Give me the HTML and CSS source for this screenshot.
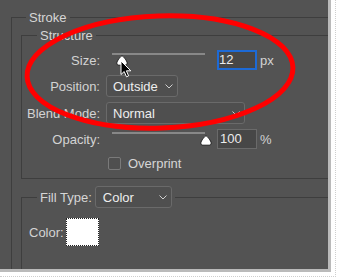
FILE: index.html
```html
<!DOCTYPE html>
<html>
<head>
<meta charset="utf-8">
<link rel="stylesheet" href="styles.css">
</head>
<body>
<div class="frame">
  <div class="panel">
    <fieldset class="group stroke">
      <legend class="legend">Stroke</legend>
      <fieldset class="group structure">
        <legend class="legend legend-inner">Structure</legend>
        <div class="row row-num">
          <span class="label">Size:</span>
          <div class="slider">
            <div class="track"></div>
            <svg class="thumb thumb-size" width="12" height="11" viewBox="0 0 12 11"><path d="M6 0.8 C7 0.8 11.2 6 11.2 8 C11.2 9.5 10.3 10.2 9 10.2 L3 10.2 C1.7 10.2 0.8 9.5 0.8 8 C0.8 6 5 0.8 6 0.8 Z" fill="#fff" stroke="#1e1e1e" stroke-width="1"/></svg>
            <svg class="cursor" width="12" height="18" viewBox="0 0 12 18"><path d="M1 1 L1 14.5 L4.2 11.5 L6.5 16.8 L8.6 15.9 L6.4 10.8 L10.8 10.8 Z" fill="#000" stroke="#fff" stroke-width="1" stroke-linejoin="round"/></svg>
          </div>
          <div class="num num-active">12</div>
          <span class="unit">px</span>
        </div>
        <div class="row">
          <span class="label">Position:</span>
          <div class="select select-pos"><span>Outside</span><svg width="8" height="5" viewBox="0 0 8 5"><path d="M0.5 0.5 L4 4 L7.5 0.5" fill="none" stroke="#cfcfcf" stroke-width="1"/></svg></div>
        </div>
        <div class="row">
          <span class="label">Blend Mode:</span>
          <div class="select select-blend"><span>Normal</span><svg width="8" height="5" viewBox="0 0 8 5"><path d="M0.5 0.5 L4 4 L7.5 0.5" fill="none" stroke="#cfcfcf" stroke-width="1"/></svg></div>
        </div>
        <div class="row row-num">
          <span class="label">Opacity:</span>
          <div class="slider">
            <div class="track"></div>
            <svg class="thumb thumb-opacity" width="12" height="11" viewBox="0 0 12 11"><path d="M6 0.8 C7 0.8 11.2 6 11.2 8 C11.2 9.5 10.3 10.2 9 10.2 L3 10.2 C1.7 10.2 0.8 9.5 0.8 8 C0.8 6 5 0.8 6 0.8 Z" fill="#fff" stroke="#1e1e1e" stroke-width="1"/></svg>
          </div>
          <div class="num">100</div>
          <span class="unit">%</span>
        </div>
        <div class="row row-check">
          <span class="label"></span>
          <span class="checkbox"></span>
          <span class="check-text">Overprint</span>
        </div>
      </fieldset>
      <fieldset class="group filltype">
        <legend class="legend legend-inner legend-fill">
          <span>Fill Type:</span>
          <div class="select select-fill"><span>Color</span><svg width="8" height="5" viewBox="0 0 8 5"><path d="M0.5 0.5 L4 4 L7.5 0.5" fill="none" stroke="#cfcfcf" stroke-width="1"/></svg></div>
        </legend>
        <div class="row-color">
          <span class="color-label">Color:</span>
          <span class="swatch"></span>
        </div>
      </fieldset>
    </fieldset>
    <svg class="annotation" width="328" height="269" viewBox="0 0 328 269"><ellipse cx="160" cy="72" rx="133" ry="56" transform="rotate(-2 160 72)" fill="none" stroke="#ff0000" stroke-width="5"/></svg>
  </div>
</div>
</body>
</html>
```

FILE: styles.css
```css
html, body {
  margin: 0;
  background: #ffffff;
}
body {
  font-family: "Liberation Sans", Arial, sans-serif;
  font-size: 13px;
}
.frame {
  width: 335px;
  height: 276px;
  border-right: 1px dotted #cfcfcf;
  border-bottom: 1px dotted #cfcfcf;
}
.panel {
  position: relative;
  width: 328px;
  height: 269px;
  box-sizing: border-box;
  padding-top: 10px;
  background: #535353;
  box-shadow: 0 0 0 3px #bababa;
  overflow: hidden;
  color: #d3d3d3;
}
.group {
  margin: 0;
  padding: 0;
  min-width: 0;
  border: 1px solid #3e3e3e;
  border-right: 0;
  border-bottom: 0;
}
.legend {
  padding: 0 3px;
  margin-left: 14px;
  line-height: 15px;
  color: #d6d6d6;
}
.legend-inner {
  margin-left: 15px;
}
.stroke {
  margin-left: 11px;
  width: 330px;
  padding-top: 3px;
}
.structure {
  margin-left: 9px;
  padding-top: 7px;
  padding-bottom: 6px;
  border-bottom: 1px solid #3e3e3e;
}
.filltype {
  margin-left: 9px;
  margin-top: 7px;
  padding-top: 10px;
  height: 120px;
}
.row {
  display: flex;
  align-items: center;
  height: 22px;
  margin-top: 5px;
}
.row:first-of-type {
  margin-top: 0;
}
.row-num {
  height: 20px;
}
.row-check {
  height: 18px;
}
.label {
  flex: none;
  width: 78px;
  margin-right: 6px;
  text-align: right;
}
.slider {
  position: relative;
  flex: none;
  width: 111px;
  height: 20px;
}
.track {
  width: 93px;
  height: 2px;
  margin: 3px 0 0 6px;
  background: #888888;
}
.thumb {
  position: absolute;
  top: 5px;
}
.thumb-size {
  left: 10px;
}
.thumb-opacity {
  left: 94px;
  top: 6px;
}
.cursor {
  position: absolute;
  left: 14px;
  top: 10px;
}
.num {
  flex: none;
  width: 40px;
  height: 20px;
  box-sizing: border-box;
  border: 1px solid #6a6a6a;
  background: #474747;
  color: #ececec;
  padding-left: 2px;
  line-height: 18px;
}
.num-active {
  border: 2px solid #1d6ad6;
  padding-left: 0;
  line-height: 16px;
}
.unit {
  margin-left: 3px;
}
.select {
  display: flex;
  align-items: center;
  justify-content: space-between;
  box-sizing: border-box;
  height: 22px;
  padding: 0 4px 0 6px;
  border: 1px solid #6a6a6a;
  border-radius: 3px;
  background: #4f4f4f;
  color: #eeeeee;
}
.select-pos {
  width: 72px;
}
.select-blend {
  width: 139px;
}
.select-fill {
  width: 77px;
  padding-left: 7px;
}
.legend-fill {
  display: flex;
  align-items: center;
  gap: 3px;
  line-height: 15px;
}
.checkbox {
  flex: none;
  width: 13px;
  height: 13px;
  box-sizing: border-box;
  margin-left: 2px;
  margin-right: 7px;
  border: 1px solid #7a7a7a;
  border-radius: 2px;
  background: #4f4f4f;
}
.check-text {
  color: #d6d6d6;
}
.row-color {
  display: flex;
  align-items: center;
  height: 28px;
}
.color-label {
  margin-left: 7px;
  margin-right: 2px;
}
.swatch {
  width: 33px;
  height: 28px;
  box-sizing: border-box;
  background: #ffffff;
  border: 1px dotted #222222;
}
.annotation {
  position: absolute;
  left: 0;
  top: 0;
  pointer-events: none;
}
```
